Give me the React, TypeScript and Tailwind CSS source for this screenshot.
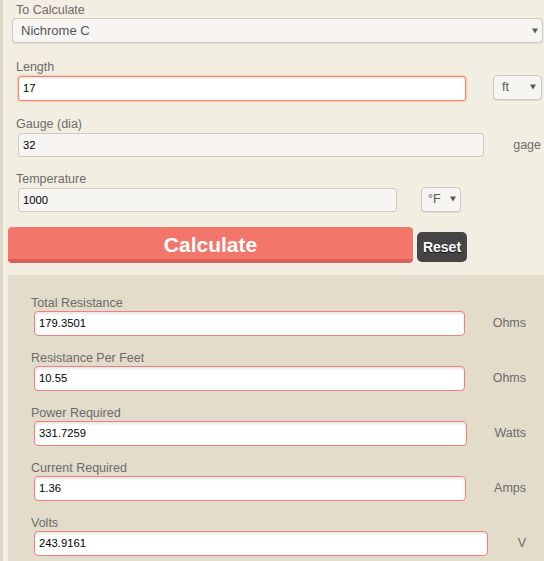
import React from "react";

const font = "font-['Liberation_Sans',Arial,sans-serif]";

function Caret() {
  return (
    <svg width="6" height="6" viewBox="0 0 6 6" className="shrink-0">
      <path d="M0 0.5h6L3 5.5z" fill="#5a5a5a" />
    </svg>
  );
}

function Select({ value, className }: { value: string; className: string }) {
  return (
    <div
      className={`flex items-center justify-between rounded-[4px] border border-[#cfcac2] bg-[#f6f5f2] text-[#555] shadow-[0_1px_1px_rgba(0,0,0,0.08)] ${className}`}
    >
      <span>{value}</span>
      <Caret />
    </div>
  );
}

function Label({ children, className = "" }: { children: React.ReactNode; className?: string }) {
  return <div className={`text-[12.5px] leading-[15px] text-[#6b6b6b] ${className}`}>{children}</div>;
}

const results = [
  { label: "Total Resistance", value: "179.3501", unit: "Ohms", w: "w-[431px]" },
  { label: "Resistance Per Feet", value: "10.55", unit: "Ohms", w: "w-[431px]" },
  { label: "Power Required", value: "331.7259", unit: "Watts", w: "w-[433px]" },
  { label: "Current Required", value: "1.36", unit: "Amps", w: "w-[432px]" },
  { label: "Volts", value: "243.9161", unit: "V", w: "w-[454px]" },
];

export default function App() {
  return (
    <div className={`min-h-screen overflow-hidden border-l-[3px] border-[#e0d8c6] bg-[#f3eee2] ${font}`}>
      <div className="pl-[9px] pr-[1px] pt-[3px]">
        <Label className="pl-[4px]">To Calculate</Label>
        <Select value="Nichrome C" className="h-[25px] w-[531px] pl-[8px] pr-[4px] text-[13px]" />

        <Label className="mt-[17px] pl-[4px]">Length</Label>
        <div className="mt-px flex items-center">
          <div className="ml-[6px] flex h-[25px] w-[448px] items-center rounded-[3px] border border-[#f08466] bg-white pl-[4px] text-[11.25px] text-black shadow-[0_0_3px_rgba(240,120,90,0.6),inset_0_1px_2px_rgba(0,0,0,0.12)]">
            17
          </div>
          <Select value="ft" className="ml-[27px] -mt-[3px] h-[25px] w-[49px] pl-[8px] pr-[5px] text-[12.5px]" />
        </div>

        <Label className="mt-[16px] pl-[4px]">Gauge (dia)</Label>
        <div className="mt-px flex items-center">
          <div className="ml-[6px] flex h-[24px] w-[466px] items-center rounded-[3px] border border-[#cfcac2] bg-[#f6f5f2] pl-[4px] text-[11.25px] text-black">
            32
          </div>
          <span className="ml-auto pr-[2px] text-[12.5px] text-[#6b6b6b]">gage</span>
        </div>

        <Label className="mt-[15px] pl-[4px]">Temperature</Label>
        <div className="mt-px flex items-center">
          <div className="ml-[6px] flex h-[24px] w-[379px] items-center rounded-[3px] border border-[#cfcac2] bg-[#f6f5f2] pl-[4px] text-[11.25px] text-black">
            1000
          </div>
          <Select value="°F" className="ml-[24px] -mt-[2px] h-[25px] w-[40px] pl-[6px] pr-[4px] text-[12.5px]" />
        </div>

        <div className="mt-[15px] flex items-start -ml-[4px]">
          <button className="h-[36px] w-[405px] rounded-[4px] border-b-[4px] border-[#d8625a] bg-[#f3766a] pt-[2px] text-[21px] font-bold leading-none text-white">
            Calculate
          </button>
          <button className="ml-[4px] mt-[5px] h-[30px] w-[50px] rounded-[5px] bg-[#454545] text-[14px] font-bold text-white [text-shadow:0_1px_1px_rgba(0,0,0,0.8)]">
            Reset
          </button>
        </div>
      </div>

      <div className="ml-[5px] mt-[12px] bg-[#e3dcca] pb-[20px] pl-[24px] pr-[18px] pt-[21px]">
        {results.map((r, i) => (
          <div key={r.label} className={i === 0 ? "" : "mt-[15px]"}>
            <Label className="-ml-px">{r.label}</Label>
            <div className="flex items-center">
              <div
                className={`ml-[2px] flex h-[25px] items-center rounded-[4px] border border-[#ee8080] bg-white pl-[4px] text-[11.25px] text-black shadow-[inset_0_2px_3px_rgba(0,0,0,0.1)] ${r.w}`}
              >
                {r.value}
              </div>
              <span className="ml-auto text-[12.5px] text-[#6b6b6b]">{r.unit}</span>
            </div>
          </div>
        ))}
      </div>
    </div>
  );
}
